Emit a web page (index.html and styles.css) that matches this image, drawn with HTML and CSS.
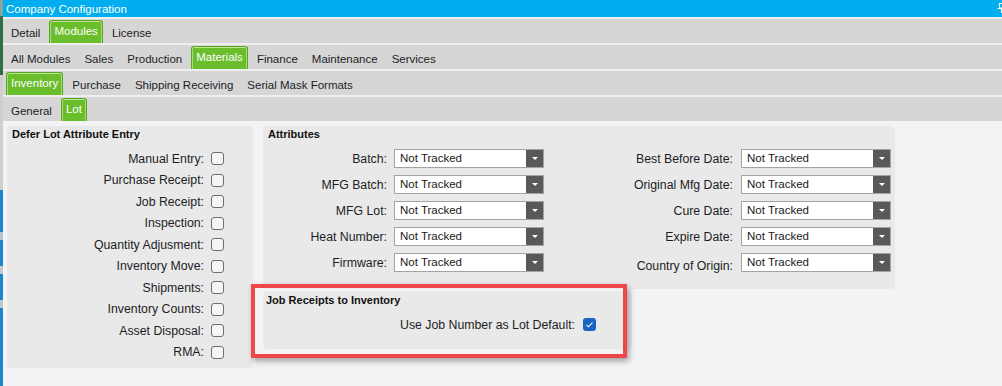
FILE: index.html
```html
<!DOCTYPE html>
<html lang="en">

<head>
    <meta charset="UTF-8">
    <meta name="viewport" content="width=device-width, initial-scale=1.0">
    <title>Company Configuration</title>
    <link rel="stylesheet" href="styles.css">
</head>

<body>
    <div class="desktop-edge"></div>
    <div class="window">
        <div class="title-bar">
            <span>Company Configuration</span>
            <svg class="pin" width="8" height="10" viewBox="0 0 8 10">
                <path d="M2.5 0.5h4v4.5h-4z M0.5 5.5h8 M4.5 5.5v4.5" fill="none" stroke="#fff" stroke-width="1.2" />
            </svg>
        </div>

        <div class="tab-row">
            <div class="tab">Detail</div>
            <div class="tab active">Modules</div>
            <div class="tab">License</div>
        </div>
        <div class="tab-row">
            <div class="tab">All Modules</div>
            <div class="tab">Sales</div>
            <div class="tab">Production</div>
            <div class="tab active">Materials</div>
            <div class="tab">Finance</div>
            <div class="tab">Maintenance</div>
            <div class="tab">Services</div>
        </div>
        <div class="tab-row">
            <div class="tab active">Inventory</div>
            <div class="tab">Purchase</div>
            <div class="tab">Shipping Receiving</div>
            <div class="tab">Serial Mask Formats</div>
        </div>
        <div class="tab-row">
            <div class="tab">General</div>
            <div class="tab active">Lot</div>
        </div>

        <div class="content">
            <div class="panel defer-panel">
                <div class="panel-title">Defer Lot Attribute Entry</div>
                <div class="check-list">
                    <span class="check-label">Manual Entry:</span><span class="checkbox"></span>
                    <span class="check-label">Purchase Receipt:</span><span class="checkbox"></span>
                    <span class="check-label">Job Receipt:</span><span class="checkbox"></span>
                    <span class="check-label">Inspection:</span><span class="checkbox"></span>
                    <span class="check-label">Quantity Adjusment:</span><span class="checkbox"></span>
                    <span class="check-label">Inventory Move:</span><span class="checkbox"></span>
                    <span class="check-label">Shipments:</span><span class="checkbox"></span>
                    <span class="check-label">Inventory Counts:</span><span class="checkbox"></span>
                    <span class="check-label">Asset Disposal:</span><span class="checkbox"></span>
                    <span class="check-label">RMA:</span><span class="checkbox"></span>
                </div>
            </div>

            <div class="right-column">
                <div class="panel attributes-panel">
                    <div class="panel-title">Attributes</div>
                    <div class="attr-grid">
                        <span class="attr-label">Batch:</span>
                        <div class="combo"><span class="combo-text">Not Tracked</span><span class="combo-btn"></span></div>
                        <span class="attr-label second">Best Before Date:</span>
                        <div class="combo"><span class="combo-text">Not Tracked</span><span class="combo-btn"></span></div>

                        <span class="attr-label">MFG Batch:</span>
                        <div class="combo"><span class="combo-text">Not Tracked</span><span class="combo-btn"></span></div>
                        <span class="attr-label second">Original Mfg Date:</span>
                        <div class="combo"><span class="combo-text">Not Tracked</span><span class="combo-btn"></span></div>

                        <span class="attr-label">MFG Lot:</span>
                        <div class="combo"><span class="combo-text">Not Tracked</span><span class="combo-btn"></span></div>
                        <span class="attr-label second">Cure Date:</span>
                        <div class="combo"><span class="combo-text">Not Tracked</span><span class="combo-btn"></span></div>

                        <span class="attr-label">Heat Number:</span>
                        <div class="combo"><span class="combo-text">Not Tracked</span><span class="combo-btn"></span></div>
                        <span class="attr-label second">Expire Date:</span>
                        <div class="combo"><span class="combo-text">Not Tracked</span><span class="combo-btn"></span></div>

                        <span class="attr-label">Firmware:</span>
                        <div class="combo"><span class="combo-text">Not Tracked</span><span class="combo-btn"></span></div>
                        <span class="attr-label second low">Country of Origin:</span>
                        <div class="combo"><span class="combo-text">Not Tracked</span><span class="combo-btn"></span></div>
                    </div>
                </div>

                <div class="panel job-panel">
                    <div class="panel-title">Job Receipts to Inventory</div>
                    <div class="job-row">
                        <span class="check-label">Use Job Number as Lot Default:</span>
                        <span class="checkbox checked">
                            <svg width="13" height="13" viewBox="0 0 13 13">
                                <path d="M3.5 6.8l2 2 4-4.3" fill="none" stroke="#fff" stroke-width="1.1" />
                            </svg>
                        </span>
                    </div>
                </div>
            </div>

            <!-- annotation frame drawn over the screenshot -->
            <div class="highlight"></div>
        </div>
    </div>
</body>

</html>
```

FILE: styles.css
```css
body {
    margin: 0;
    display: flex;
    height: 386px;
    overflow: hidden;
    font-family: 'Liberation Sans', Arial, sans-serif;
    font-size: 11.5px;
    color: #1d1d26;
    background-color: #f3f3f5;
}

.desktop-edge {
    width: 3px;
    flex-shrink: 0;
    background: linear-gradient(#8aa59a 0, #8aa59a 16px, #2f6d46 16px, #2f6d46 75px,
        #cfcfcf 75px, #cfcfcf 190px, #1c86cc 190px, #1c86cc 232px, #b8c4cc 232px,
        #b8c4cc 240px, #1c86cc 240px, #1c86cc 266px, #c2c8cc 266px, #c2c8cc 274px,
        #1c86cc 274px, #1c86cc 300px, #c2c8cc 300px, #c2c8cc 308px, #1c86cc 308px);
}

.window {
    flex: 1;
    display: flex;
    flex-direction: column;
    background-color: #efefef;
}

.title-bar {
    height: 17px;
    margin-bottom: 2px;
    padding-left: 3px;
    display: flex;
    align-items: center;
    justify-content: space-between;
    overflow: hidden;
    background-color: #00adee;
    color: #fff;
    font-size: 11.5px;
}

.title-bar .pin {
    margin-right: -3px;
    margin-top: -2px;
}

.tab-row {
    height: 24px;
    margin-bottom: 2px;
    padding-left: 3px;
    display: flex;
    gap: 4px;
    background-color: #d6d6d6;
}

.tab {
    height: 24px;
    box-sizing: border-box;
    padding: 3px 5px 0;
    line-height: 22px;
    white-space: nowrap;
    color: #1d1d26;
}

.tab.active {
    height: 23px;
    margin-top: 1px;
    padding: 1px 4px 0;
    line-height: 19px;
    border: 1px solid #5aa51f;
    border-bottom: none;
    border-radius: 3px 3px 0 0;
    background-color: #6abd2b;
    box-shadow: inset 0 1px 0 #b9e694, inset 1px 0 0 #a6dc7c, inset -1px 0 0 #a6dc7c;
    color: #fff;
}

.content {
    position: relative;
    flex: 1;
    display: flex;
    align-items: flex-start;
    gap: 10px;
    padding: 5px 0 0 4px;
    margin-top: -2px;
    background-color: #f3f3f5;
}

.panel {
    background-color: #e9e9e9;
    border-radius: 4px;
}

.panel-title {
    line-height: 16px;
    font-size: 11px;
    font-weight: bold;
    color: #111;
}

.defer-panel {
    width: 246px;
    height: 242px;
    padding-left: 5px;
    box-sizing: border-box;
}

.check-list {
    margin-top: 6px;
    padding-right: 29px;
    display: grid;
    grid-template-columns: 1fr 13px;
    grid-auto-rows: 21.5px;
    column-gap: 7px;
    align-items: center;
}

.check-label {
    font-size: 12.3px;
    text-align: right;
    white-space: nowrap;
}

.checkbox {
    display: block;
    width: 13px;
    height: 13px;
    box-sizing: border-box;
    border: 1px solid #6e6e6e;
    border-radius: 3px;
    background-color: #f5f5f5;
}

.checkbox.checked {
    border: none;
    background-color: #1766c3;
}

.checkbox.checked svg {
    display: block;
}

.right-column {
    display: flex;
    flex-direction: column;
    gap: 2px;
}

.attributes-panel {
    width: 632px;
    height: 163px;
    padding-left: 5px;
    box-sizing: border-box;
}

.attr-grid {
    margin-top: 7px;
    display: grid;
    grid-template-columns: 126px 150px 197px 150px;
    grid-auto-rows: 19px;
    row-gap: 7px;
}

.attr-label {
    padding-right: 7px;
    font-size: 12.3px;
    line-height: 20px;
    text-align: right;
    white-space: nowrap;
}

.attr-label.second {
    padding-right: 8px;
}

.attr-label.low {
    line-height: 27px;
}

.combo {
    display: flex;
    height: 19px;
    box-sizing: border-box;
    border: 1px solid #a3a3a3;
    background-color: #fff;
}

.combo-text {
    flex: 1;
    padding-left: 5px;
    line-height: 17px;
    color: #1a1a1a;
}

.combo-btn {
    width: 17px;
    display: flex;
    align-items: center;
    justify-content: center;
    background-color: #595959;
}

.combo-btn::after {
    content: "";
    border-left: 3px solid transparent;
    border-right: 3px solid transparent;
    border-top: 3px solid #fff;
}

.job-panel {
    width: 369px;
    height: 58px;
    padding: 1px 36px 0 3px;
    box-sizing: border-box;
}

.job-row {
    margin-top: 10px;
    display: flex;
    justify-content: flex-end;
    align-items: center;
    gap: 8px;
    height: 13px;
}

.highlight {
    position: absolute;
    left: 248px;
    top: 163px;
    width: 376px;
    height: 74px;
    box-sizing: border-box;
    border: 4px solid #ef4747;
    box-shadow: 2px 3px 6px rgba(0, 0, 0, 0.35);
}
```
